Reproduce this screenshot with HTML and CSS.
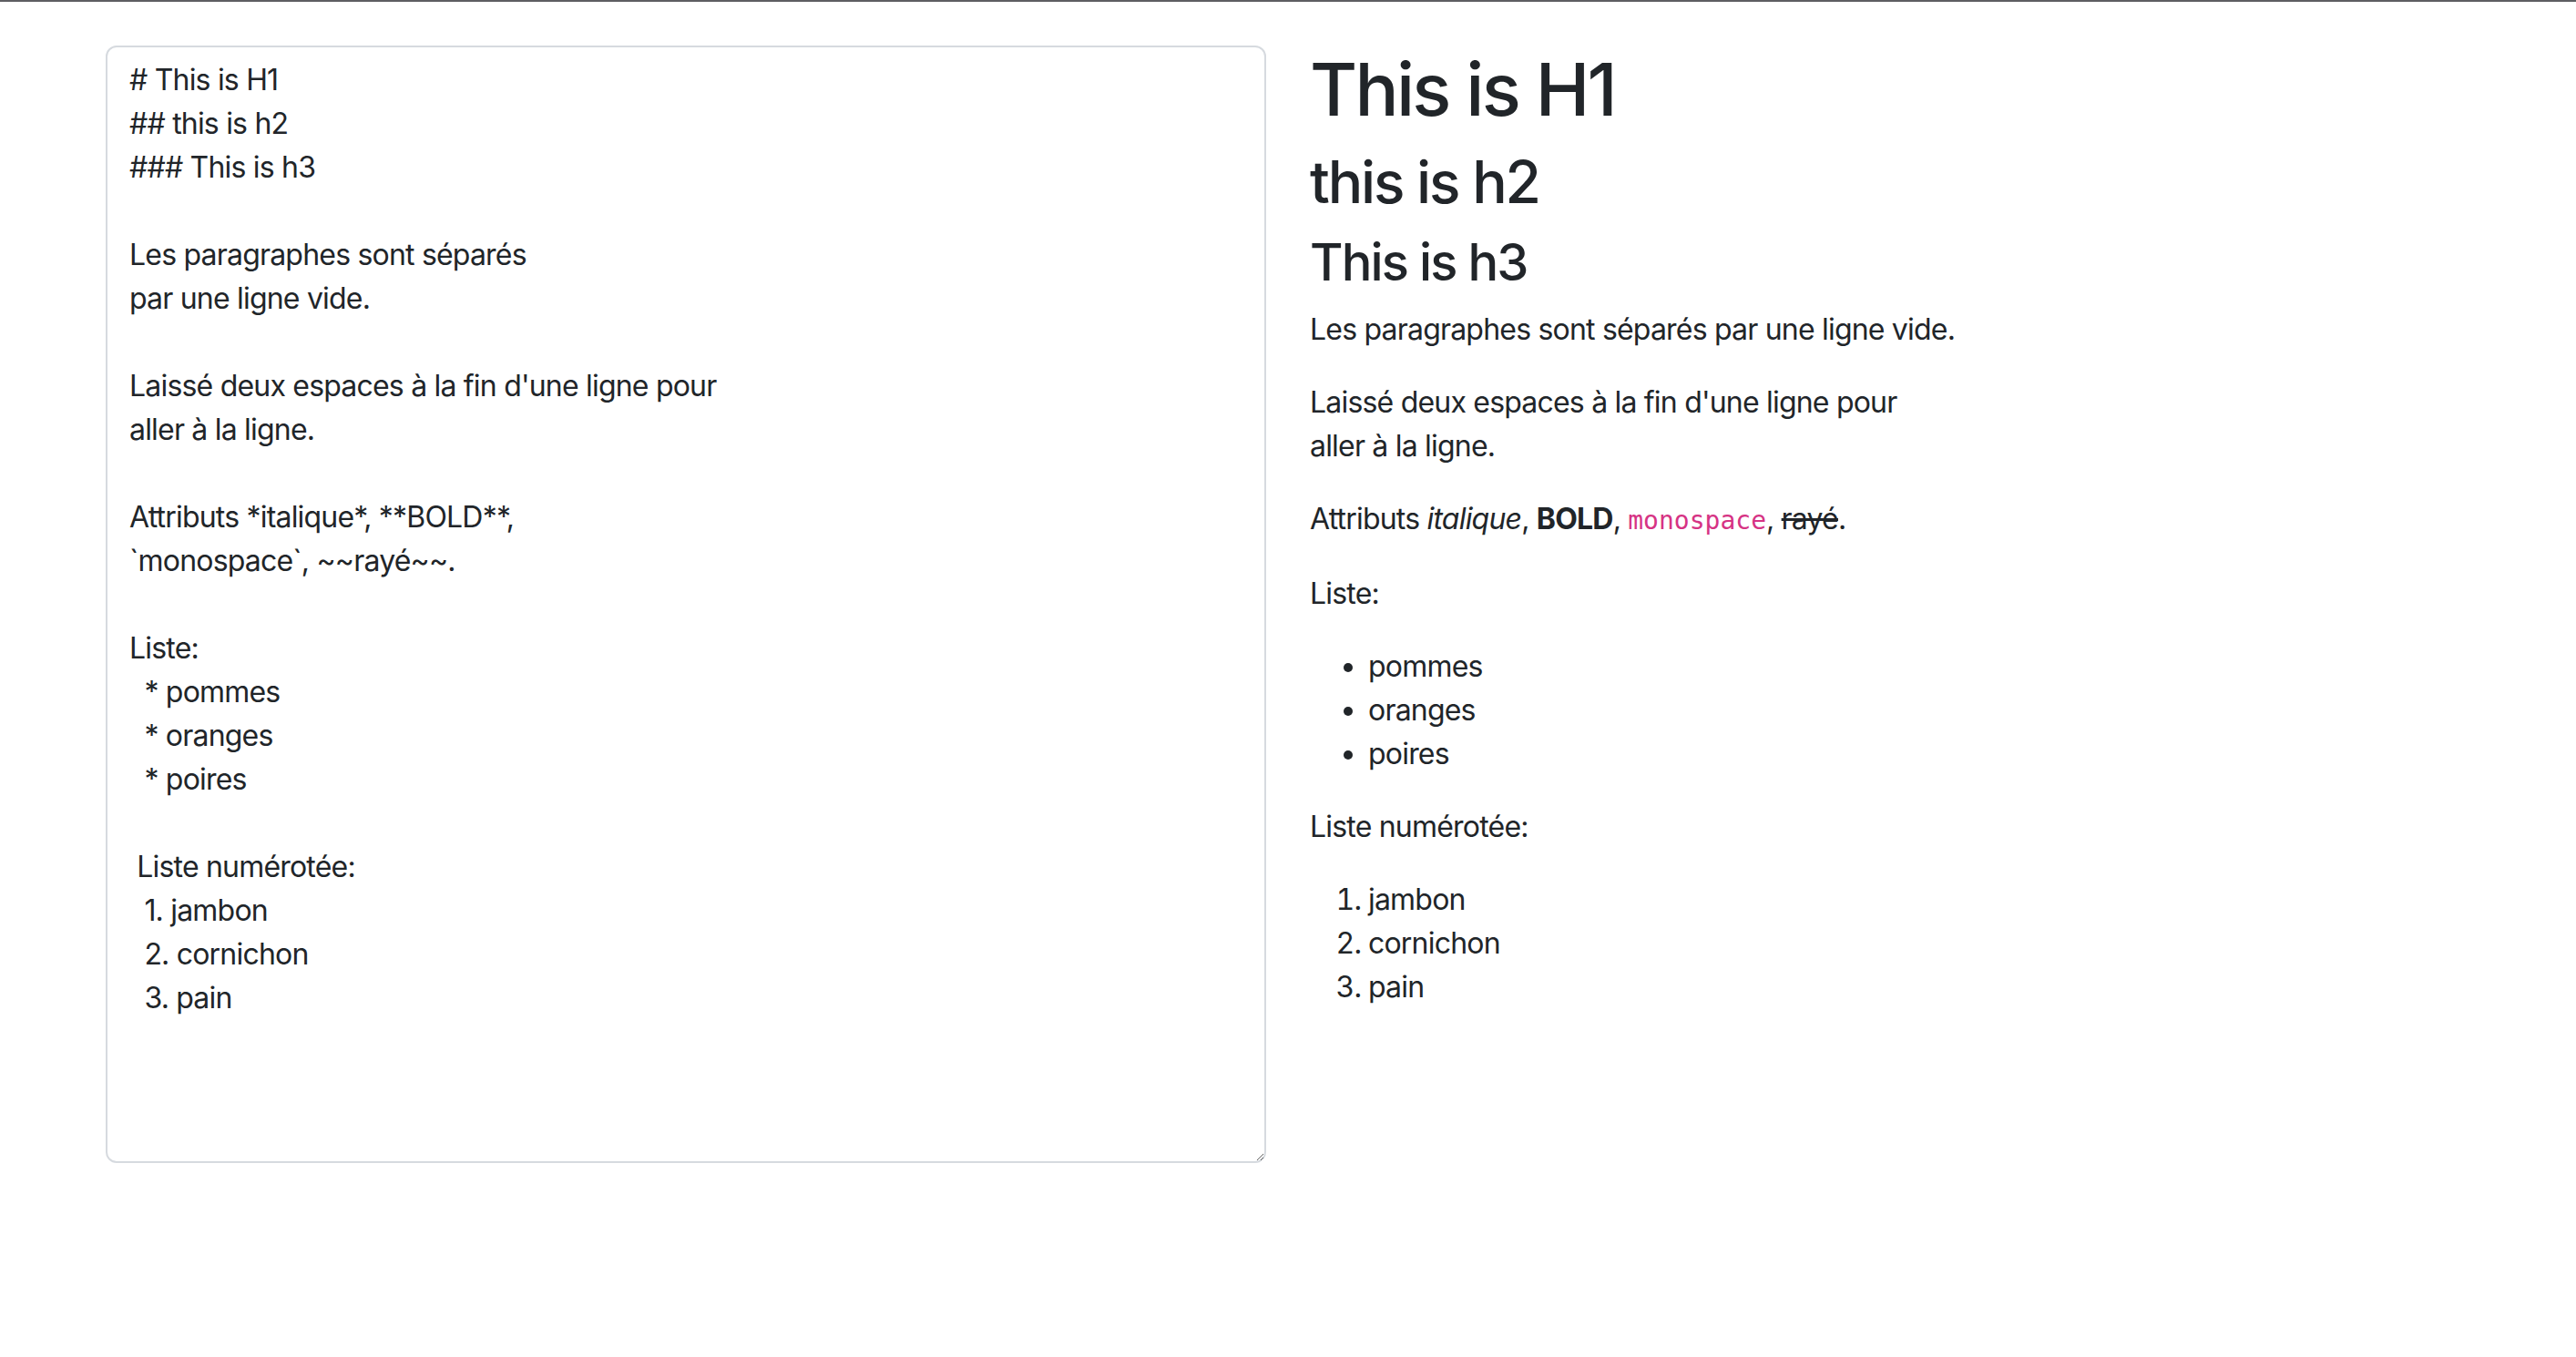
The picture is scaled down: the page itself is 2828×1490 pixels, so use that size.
FILE: index.html
```html
<!DOCTYPE html>
<html lang="fr">
<head>
<meta charset="utf-8">
<title>Markdown</title>
<link rel="stylesheet" href="styles.css">
</head>
<body>
<div class="topbar"></div>
<div class="container">
  <div class="row">
    <div class="col">
      <textarea class="editor" spellcheck="false"># This is H1
## this is h2
### This is h3

Les paragraphes sont séparés
par une ligne vide.

Laissé deux espaces à la fin d'une ligne pour  
aller à la ligne.

Attributs *italique*, **BOLD**,
`monospace`, ~~rayé~~.

Liste:
  * pommes
  * oranges
  * poires

 Liste numérotée:
  1. jambon
  2. cornichon
  3. pain</textarea>
    </div>
    <div class="col preview">
      <h1>This is H1</h1>
      <h2>this is h2</h2>
      <h3>This is h3</h3>
      <p>Les paragraphes sont séparés par une ligne vide.</p>
      <p>Laissé deux espaces à la fin d'une ligne pour<br>aller à la ligne.</p>
      <p>Attributs <em>italique</em>, <strong>BOLD</strong>, <code>monospace</code>, <del>rayé</del>.</p>
      <p>Liste:</p>
      <ul>
        <li>pommes</li>
        <li>oranges</li>
        <li>poires</li>
      </ul>
      <p>Liste numérotée:</p>
      <ol>
        <li>jambon</li>
        <li>cornichon</li>
        <li>pain</li>
      </ol>
    </div>
  </div>
</div>
</body>
</html>
```

FILE: styles.css
```css
* { box-sizing: border-box; }
html, body {
  margin: 0;
  padding: 0;
  background: #fff;
}
body {
  font-family: Inter, "Noto Sans", "Liberation Sans", sans-serif;
  font-size: 32px;
  line-height: 48px;
  letter-spacing: -0.025em;
  color: #212529;
}
.topbar {
  height: 2px;
  background: #5e5e62;
}
.container {
  max-width: 2644px;
  margin: 0 auto;
  padding: 48px 24px 0;
}
.row {
  display: grid;
  grid-template-columns: 1fr 1fr;
  column-gap: 48px;
}
.col { min-width: 0; }
.editor {
  display: block;
  width: 100%;
  height: 1227px;
  padding: 12px 24px;
  border: 2px solid #d6dadf;
  border-radius: 12px;
  font-family: Inter, "Noto Sans", "Liberation Sans", sans-serif;
  font-size: 32px;
  line-height: 48px;
  letter-spacing: -0.025em;
  color: #212529;
  background: #fff;
  resize: vertical;
  outline: none;
  white-space: pre;
  overflow: hidden;
}
.preview h1, .preview h2, .preview h3 {
  margin: 0 0 16px;
  font-weight: 500;
  line-height: 1.2;
  letter-spacing: -0.034em;
}
.preview h1 { font-size: 80px; }
.preview h2 { font-size: 64px; }
.preview h3 { font-size: 56px; }
.preview p { margin: 0 0 32px; }
.preview ul, .preview ol {
  margin: 0 0 32px;
  padding-left: 64px;
}
.preview code {
  font-family: "DejaVu Sans Mono", "Liberation Mono", monospace;
  font-size: 28px;
  letter-spacing: 0;
  color: #d63384;
}
.preview strong { font-weight: 700; }
```
